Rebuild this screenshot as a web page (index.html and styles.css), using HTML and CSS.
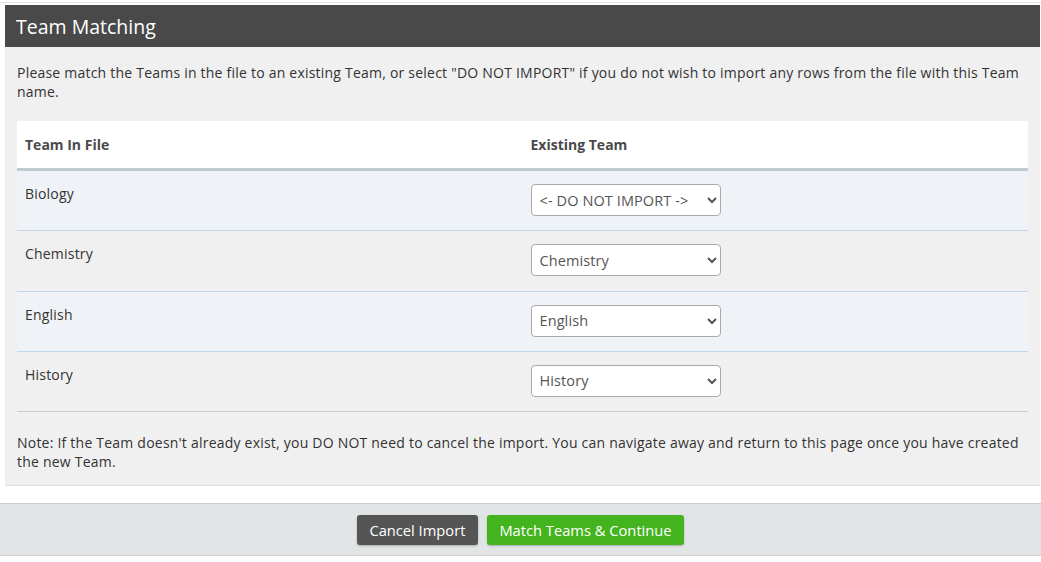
FILE: index.html
```html
<!DOCTYPE html>
<html>
<head>
<meta charset="utf-8">
<link rel="stylesheet" href="styles.css">
</head>
<body>
<div class="topline"></div>
<div class="panel">
  <div class="panel-head">Team Matching</div>
  <div class="panel-body">
    <p class="intro">Please match the Teams in the file to an existing Team, or select "DO NOT IMPORT" if you do not wish to import any rows from the file with this Team name.</p>
    <table class="grid">
      <thead>
        <tr><th>Team In File</th><th>Existing Team</th></tr>
      </thead>
      <tbody>
        <tr class="alt"><td>Biology</td><td><select class="pick"><option>&lt;- DO NOT IMPORT -&gt;</option></select></td></tr>
        <tr><td>Chemistry</td><td><select class="pick"><option>Chemistry</option></select></td></tr>
        <tr class="alt"><td>English</td><td><select class="pick"><option>English</option></select></td></tr>
        <tr class="last"><td>History</td><td><select class="pick"><option>History</option></select></td></tr>
      </tbody>
    </table>
    <p class="note">Note: If the Team doesn't already exist, you DO NOT need to cancel the import. You can navigate away and return to this page once you have created the new Team.</p>
  </div>
</div>
<div class="footer">
  <button class="btn btn-dark">Cancel Import</button>
  <button class="btn btn-green">Match Teams &amp; Continue</button>
</div>
</body>
</html>
```
FILE: styles.css
```css
html, body {
  margin: 0;
  padding: 0;
  background: #ffffff;
  font-family: "Open Sans", "Noto Sans", sans-serif;
  color: #333333;
}
.topline {
  margin-top: 2px;
  height: 1px;
  background: #e0e0e0;
}
.panel {
  margin: 2px 1px 0 5px;
}
.panel-head {
  height: 42px;
  line-height: 43px;
  background: #494949;
  color: #ffffff;
  font-size: 19.5px;
  padding: 0 11px;
}
.panel-body {
  background: #f0f0f0;
  padding: 16px 12px 14px;
  border-bottom: 1px solid #dcdcdc;
}
.intro, .note {
  margin: 0;
  font-size: 14px;
  letter-spacing: 0.22px;
  line-height: 19px;
  color: #333333;
}
.grid {
  width: 100%;
  border-collapse: collapse;
  margin: 20px 0 21px;
  font-size: 14px;
}
.grid th {
  background: #ffffff;
  text-align: left;
  font-weight: bold;
  color: #4a4a4a;
  padding: 12px 8px;
  line-height: 23px;
  width: 50%;
  border-bottom: 3px solid #c0cad0;
}
.grid td {
  vertical-align: top;
  padding: 13px 8px 14.25px;
  line-height: 20px;
  letter-spacing: 0.2px;
  color: #333333;
  border-bottom: 1px solid #c3d6ea;
}
.grid tr.alt td {
  background: #eff3f7;
}
.grid tr.last td {
  border-bottom-color: #cccccc;
}
.pick {
  display: block;
  width: 190px;
  height: 32px;
  border: 1px solid #a9a9a9;
  border-radius: 4px;
  background: #ffffff;
  font-family: "Open Sans", "Noto Sans", sans-serif;
  font-size: 14.5px;
  letter-spacing: 0.1px;
  color: #555555;
  padding: 0 4px;
}
.footer {
  margin-top: 17px;
  background: #e2e5e6;
  border-top: 1px solid #cdcdcd;
  border-bottom: 1px solid #cdcdcd;
  padding: 11px 0 10px;
  display: flex;
  justify-content: center;
  gap: 9px;
}
.btn {
  height: 30px;
  border: none;
  border-radius: 3px;
  color: #ffffff;
  font-family: "Open Sans", "Noto Sans", sans-serif;
  font-size: 14.7px;
  padding: 0 12.5px;
  box-shadow: 0 1px 2px rgba(0,0,0,0.25);
}
.btn-dark {
  background: #555555;
}
.btn-green {
  background: #44b41e;
}
```
